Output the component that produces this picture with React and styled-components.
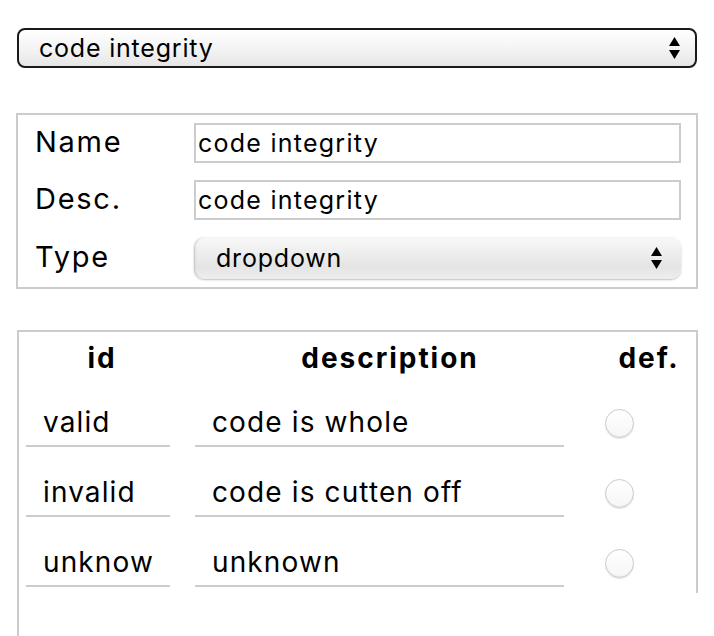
import React from 'react';
import styled, { createGlobalStyle } from 'styled-components';

const rows = [
  { id: 'valid', description: 'code is whole' },
  { id: 'invalid', description: 'code is cutten off' },
  { id: 'unknow', description: 'unknown' },
];

const Arrows = () => (
  <svg width="11" height="22" viewBox="0 0 11 22">
    <polygon points="5.5,0 11,9 0,9" fill="#000" />
    <polygon points="0,13 11,13 5.5,22" fill="#000" />
  </svg>
);

const App = () => {
  return (
    <Page>
      <GlobalStyle />
      <TopSelect>
        <span>code integrity</span>
        <Arrows />
      </TopSelect>

      <FormPanel>
        <Label>Name</Label>
        <TextInput defaultValue='code integrity' />
        <Label>Desc.</Label>
        <TextInput defaultValue='code integrity' />
        <Label>Type</Label>
        <TypeSelect>
          <span>dropdown</span>
          <Arrows />
        </TypeSelect>
      </FormPanel>

      <TablePanel>
        <OptionGrid>
          <HeadCell>id</HeadCell>
          <HeadCell>description</HeadCell>
          <HeadCell>def.</HeadCell>
          {rows.map((row) => (
            <React.Fragment key={row.id}>
              <CellInput width={144} defaultValue={row.id} />
              <CellInput width={369} defaultValue={row.description} />
              <Radio type='radio' name='def' />
            </React.Fragment>
          ))}
        </OptionGrid>
      </TablePanel>
    </Page>
  );
};

export default App;

const GlobalStyle = createGlobalStyle`
  body {
    margin: 0;
    background: #fff;
    color: #000;
    font-family: Inter, "Liberation Sans", sans-serif;
    letter-spacing: 0.05em;
  }
`;

const Page = styled.div`
  display: flex;
  flex-direction: column;
  padding: 28px 16px 0;
`;

const TopSelect = styled.div`
  display: flex;
  align-items: center;
  justify-content: space-between;
  height: 40px;
  box-sizing: border-box;
  margin: 0 1px 45px;
  padding: 0 15px 0 20px;
  border: 2px solid #1a1a1a;
  border-radius: 8px;
  background: linear-gradient(#ffffff, #f4f4f4 50%, #e6e6e6);
  font-size: 25px;
`;

const FormPanel = styled.div`
  display: grid;
  grid-template-columns: 159px 1fr;
  grid-template-rows: 40px 40px 42px;
  row-gap: 17px;
  align-items: center;
  padding: 8px 15px 8px 17px;
  border: 2px solid #ccc;
  margin-bottom: 41px;
`;

const Label = styled.span`
  font-size: 29px;
  letter-spacing: 0.06em;
  line-height: 1;
  margin-top: -3px;
`;

const TextInput = styled.input`
  height: 40px;
  box-sizing: border-box;
  padding: 0 2px;
  border: 2px solid #ccc;
  font: inherit;
  font-size: 25px;
  letter-spacing: 0.05em;
  outline: none;
`;

const TypeSelect = styled.div`
  display: flex;
  align-items: center;
  justify-content: space-between;
  height: 42px;
  box-sizing: border-box;
  padding: 0 19px 0 22px;
  border-radius: 10px;
  background: linear-gradient(#f8f8f8, #ececec 45%, #e4e4e4 70%, #eeeeee);
  box-shadow: inset 2px 0 2px -1px #c4c4c4, 0 1px 2px rgba(0, 0, 0, 0.25);
  font-size: 25px;
`;

const TablePanel = styled.div`
  border-top: 2px solid #ccc;
  border-left: 2px solid #ccc;
  margin-left: 1px;
  padding-bottom: 60px;
`;

const OptionGrid = styled.div`
  display: grid;
  grid-template-columns: 152px 390px 1fr;
  grid-template-rows: 45px repeat(3, 48px);
  column-gap: 17px;
  row-gap: 22px;
  padding: 0 0 6px 7px;
  border-right: 2px solid #ccc;
`;

const HeadCell = styled.div`
  padding-top: 10px;
  text-align: center;
  font-size: 28px;
  font-weight: 700;
  letter-spacing: 0.07em;
  line-height: 32px;
`;

const CellInput = styled.input`
  width: ${({ width }) => width}px;
  height: 48px;
  box-sizing: border-box;
  padding: 0 0 0 17px;
  border: none;
  border-bottom: 2px solid #ccc;
  font: inherit;
  font-size: 28px;
  letter-spacing: 0.04em;
  outline: none;
`;

const Radio = styled.input`
  appearance: none;
  width: 29px;
  height: 29px;
  margin: 0 0 0 3px;
  align-self: center;
  border: 1px solid #cbcbcb;
  border-radius: 50%;
  background: linear-gradient(#ffffff, #f6f6f6);
  box-shadow: inset 0 -1px 1px rgba(0, 0, 0, 0.06), 0 1px 1px rgba(0, 0, 0, 0.1);
`;
